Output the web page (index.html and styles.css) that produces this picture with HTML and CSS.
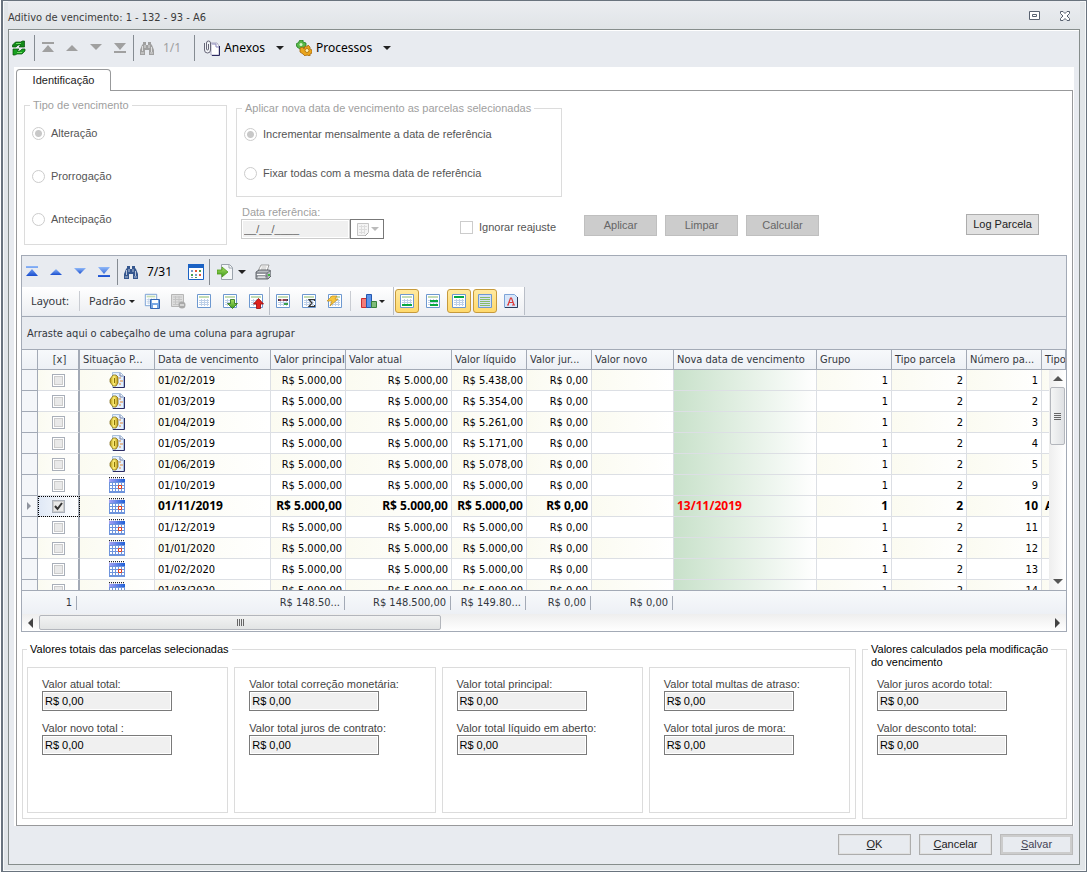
FILE: index.html
```html
<!DOCTYPE html>
<html lang="pt-BR">
<head>
    <meta charset="UTF-8">
    <meta name="viewport" content="width=device-width, initial-scale=1.0">
    <title>Aditivo de vencimento</title>
    <link rel="stylesheet" href="styles.css">
</head>
<body>

<svg class="sprite" xmlns="http://www.w3.org/2000/svg">
    <defs>
        <linearGradient id="blue" x1="0" y1="0" x2="0" y2="1"><stop offset="0" stop-color="#8fb8f8"/><stop offset="1" stop-color="#1a4fd0"/></linearGradient>
        <linearGradient id="leaf" x1="0" y1="0" x2="0" y2="1"><stop offset="0" stop-color="#a8e060"/><stop offset="1" stop-color="#3f9a20"/></linearGradient>
        <linearGradient id="gold" x1="0" y1="0" x2="1" y2="0"><stop offset="0" stop-color="#b89a18"/><stop offset=".5" stop-color="#fff27a"/><stop offset="1" stop-color="#b8941a"/></linearGradient>
        <linearGradient id="sky" x1="0" y1="0" x2="1" y2="0"><stop offset="0" stop-color="#a6a2f4"/><stop offset="1" stop-color="#1c5fd8"/></linearGradient>
    </defs>
    <symbol id="i-refresh" viewBox="0 0 16 16">
        <path d="M1.500 7V5l3-3h5l2-1h2v6H8l2-2H7L5 7z" fill="#128a18" stroke="#064d0a" stroke-width=".7"/>
        <path d="M14 9v2l-3 3H6l-2 1H2V9h6l-2 2h3l2-2z" fill="#17a020" stroke="#064d0a" stroke-width=".7"/>
        <path d="M5 3.500h5M6 12.500h5" stroke="#6ddc64"/>
    </symbol>
    <symbol id="i-first" viewBox="0 0 16 16"><path d="M2 2h12v2H2zM8 5l6 7H2z"/></symbol>
    <symbol id="i-up" viewBox="0 0 16 16"><path d="M8 5l6 6H2z"/></symbol>
    <symbol id="i-down" viewBox="0 0 16 16"><path d="M2 4h12L8 10z"/></symbol>
    <symbol id="i-last" viewBox="0 0 16 16"><path d="M2 3h12L8 10zM2 11h12v2H2z"/></symbol>
    <symbol id="i-find" viewBox="0 0 16 16">
        <path d="M4 2h3v3h2V2h3v2l1 1 2 5v5h-5v-5H6v5H1v-5l2-5 1-1z"/>
        <path d="M3.500 6v5M6 5v3M12.500 7v5M10 5v3M2 13h3M11 13h3" stroke="#fff" stroke-opacity=".65" fill="none"/>
    </symbol>
    <symbol id="i-attach" viewBox="0 0 16 16">
        <path d="M7 3h6l2 3v9H7z" fill="#fff" stroke="#9a98b8" stroke-width=".8"/>
        <path d="M8 4h4v3h3" fill="#eef" stroke="#8b88b8"/>
        <path d="M15.500 6v9.500H8" fill="none" stroke="#2c2a60"/>
        <path d="M.5 3v7a3 3 0 0 0 6 0V3a2 2 0 0 0-4 0v6a1 1 0 0 0 2 0V4" fill="#fff" fill-opacity=".4" stroke="#667"/>
    </symbol>
    <symbol id="i-gears" viewBox="0 0 16 16">
        <path d="M4 0h3v2l3 1v3L8 8 4 9 1 7 0 4l2-1z" fill="#58b848" stroke="#1f7d1f" stroke-width=".8"/>
        <circle cx="5" cy="4.500" r="1.500" fill="#d8f8c8"/>
        <path d="M4 8l3-1 1 2 1-3 2 1 1-2 2 2v2l2 1v3l-2 1v2l-3-1-2 1-2-2-3-2z" fill="#eaa51c" stroke="#a3660a" stroke-width=".8"/>
        <circle cx="11" cy="10.500" r="2" fill="#fff3b4" stroke="#b87a10"/>
    </symbol>
    <symbol id="i-month" viewBox="0 0 16 16">
        <path d="M.5.5h15v15H.5z" fill="#fff" stroke="#1b62c4"/><path d="M0 0h16v4H0z" fill="#1b62c4"/>
        <path d="M3 6h2v2H3zM7 10h2v2H7zM3 13h2v1H3z" fill="#7a9ccc"/><path d="M7 6h2v2H7zM11 10h2v2h-2z" fill="#e45a38"/><path d="M11 6h2v2h-2zM3 10h2v2H3zM7 13h2v1H7z" fill="#49a050"/>
    </symbol>
    <symbol id="i-export" viewBox="0 0 16 16">
        <path d="M4.500.500h8l3 3v12h-11z" fill="#f4f6f8" stroke="#9ba3ac"/><path d="M12 1v3h3" fill="#fff" stroke="#9ba3ac"/>
        <path d="M0 6h5V3l6 5-6 5v-3H0z" fill="url(#leaf)" stroke="#4f9c18" stroke-width=".8"/>
    </symbol>
    <symbol id="i-print" viewBox="0 0 16 16">
        <path d="M6 1h8l-2 6H3z" fill="#fff" stroke="#888" stroke-width=".8"/><path d="M6.500 3h5M6 5h5" stroke="#bbb"/>
        <path d="M1 8l3-2h10l2 1v5l-3 3H1z" fill="#b7bbc1" stroke="#474b52" stroke-width=".8"/>
        <path d="M1 9h11l3-2M1 12h11M12 9v6" fill="none" stroke="#5f636a" stroke-width=".8"/><path d="M3 13h7M2 10.500h8" stroke="#fff"/><path d="M13 11h2" stroke="#3ebd3c" stroke-width="2"/>
    </symbol>
    <!-- sheet shared by the layout icons -->
    <symbol id="i-sheet" viewBox="0 0 16 16">
        <path d="M1.500 1.500h13v13h-13z" fill="#fff" stroke="#6d98d0"/>
        <path d="M3 3h10v2H3z" fill="#c3dcb4"/><path d="M3 7.500h10M3 9.500h10M3 11.500h10M5.500 6v7M8.500 6v7M11.500 6v7" stroke="#bed0e8"/>
    </symbol>
    <symbol id="i-save" viewBox="0 0 16 16"><use href="#i-sheet" width="14" height="14"/><path d="M6.500 6.500h9v9h-9z" fill="#79a8e4" stroke="#3568b4"/><path d="M8 7h6v3H8zM9 12h4v3H9z" fill="#fff"/></symbol>
    <symbol id="i-remove" viewBox="0 0 16 16"><path d="M1.500 1.500h12v12h-12z" fill="#ddd" stroke="#b6b6b6"/><path d="M3 4h9M3 6.500h9M3 9h9M3 11.500h6M5.500 3v9M9 3v9" stroke="#c4c4c4"/><circle cx="12" cy="12" r="3.500" fill="#a9a9a9"/><path d="M10 12h4" stroke="#fff"/></symbol>
    <symbol id="i-in" viewBox="0 0 16 16"><use href="#i-sheet" width="16" height="16"/><path d="M8.500 6.500h4v4h3L10.500 15.500 5.500 10.500h3z" fill="url(#leaf)" stroke="#297018" stroke-width=".8"/></symbol>
    <symbol id="i-out" viewBox="0 0 16 16"><use href="#i-sheet" width="16" height="16"/><path d="M8.500 15.500h4V11h3l-5-5.500L5.500 11h3z" fill="#e0201c" stroke="#980808" stroke-width=".8"/></symbol>
    <symbol id="i-fields" viewBox="0 0 16 16"><use href="#i-sheet"/><path d="M3 6h3v2H3zM8 6h5v2H8z" fill="#333c54"/><path d="M4 7h8" stroke="#d44"/><path d="M9 10h4v2H9z" fill="#3ba04c"/></symbol>
    <symbol id="i-sum" viewBox="0 0 16 16"><use href="#i-sheet"/><path d="M13.500 8V6.500H8l3 3.500-3 3.500h5.500V12" fill="none" stroke="#333" stroke-width="1.200"/></symbol>
    <symbol id="i-flash" viewBox="0 0 16 16"><use href="#i-sheet"/><path d="M5 3h5L8 6h3l-8 7 2-5H0z" fill="#f7c53c" stroke="#c08c20" stroke-width=".7"/></symbol>
    <symbol id="i-chart" viewBox="0 0 16 16"><path d="M.5 5.500h5v9h-5z" fill="#f47c78" stroke="#cc2d2d"/><path d="M5.500 1.500h5v13h-5z" fill="#5c94ea" stroke="#2457ae"/><path d="M10.500 8.500h5v6h-5z" fill="#7fbc7a" stroke="#38803c"/></symbol>
    <symbol id="i-foot" viewBox="0 0 16 16"><use href="#i-sheet"/><path d="M3 11h10v2H3z" fill="#08a840"/></symbol>
    <symbol id="i-group" viewBox="0 0 16 16"><use href="#i-sheet"/><path d="M5 7h8v2H5zM5 11h8v2H5z" fill="#08a840"/></symbol>
    <symbol id="i-head" viewBox="0 0 16 16"><use href="#i-sheet"/><path d="M3 3h10v2H3z" fill="#08a840"/></symbol>
    <symbol id="i-lines" viewBox="0 0 16 16"><path d="M1.500 1.500h13v13h-13z" fill="#d2e0f6" stroke="#6d98d0"/><path d="M3 4.500h10M3 6.500h10M3 8.500h10M3 10.500h10M3 12.500h10" stroke="#86bb68"/></symbol>
    <symbol id="i-font" viewBox="0 0 16 16"><path d="M1.500 1.500h10l3 3v10h-13z" fill="#d6e6fa" stroke="#7ea4d8"/><path d="M14.500 4v10.500H2" fill="none" stroke="#2d3c5c"/><path d="M4 12h2M9 12h3M5 12l2.500-7h1L11 12M6 9.500h4" fill="none" stroke="#dc3a3a" stroke-width="1.200"/></symbol>
    <symbol id="i-paid" viewBox="0 0 16 16">
        <path d="M3.500.500h8l3 3v12h-11z" fill="#e4f0ff" stroke="#a9c0dc"/><path d="M11 1v3h3" fill="#fff" stroke="#7080a8"/><path d="M15.500 4v11.500H4" fill="none" stroke="#2c2c64"/>
        <path d="M10 6h2M11 9h3M10 12h2" stroke="#e08834"/>
        <path d="M4 3h3l2 2v6l-2 3H4L1 10V7z" fill="url(#gold)" stroke="#776208" stroke-width=".7"/><path d="M5.500 6v5" stroke="#8a7208"/>
    </symbol>
    <symbol id="i-cal" viewBox="0 0 16 16">
        <path d="M0 2h16v14H0z" fill="#6e94dc"/><path d="M0 2h16v3H0z" fill="url(#sky)"/>
        <path d="M0 .5h16" stroke="#222" stroke-dasharray="1 1"/><path d="M0 1.500h16" stroke="#bbc" stroke-dasharray="1 1"/>
        <path d="M1 6h2v2H1zM4 6h2v2H4zM7 6h2v2H7zM10 6h2v2h-2zM13 6h2v2h-2zM1 9h2v2H1zM4 9h2v2H4zM7 9h2v2H7zM13 9h2v2h-2zM1 12h2v2H1zM4 12h2v2H4zM7 12h2v2H7zM10 12h2v2h-2zM13 12h2v2h-2z" fill="#fff"/>
        <path d="M9.500 8.500h3v3h-3z" fill="#fff" stroke="#e2401c"/>
    </symbol>
    <symbol id="i-picker" viewBox="0 0 16 16"><path d="M2.500 2.500h11v9l-3 3h-8z" fill="#f4f4f4" stroke="#c5c5c5"/><path d="M4 5.500h8M4 8.500h8M4 11.500h6M6.500 4v9M9.500 4v9" stroke="#ddd"/><path d="M13 12l-3 3" stroke="#aaa"/></symbol>
    <symbol id="i-max" viewBox="0 0 12 10"><path d="M1.500.500h10v8h-10z" fill="#fff" stroke="#596270"/><path d="M4.500 3.500h4v2h-4z" fill="none" stroke="#596270"/></symbol>
    <symbol id="i-close" viewBox="0 0 12 10"><path d="M1.500.500h2.500l2 2 2-2h2.500v2L8 5l2.500 2.500v2H8l-2-2-2 2H1.500v-2L4 5 1.500 2.500z" fill="#fff" stroke="#596270"/></symbol>
</svg>

<div class="window">
    <header class="titlebar">
        <h1>Aditivo de vencimento: 1 - 132 - 93 - A6</h1>
        <button class="win-btn" aria-label="Maximizar"><svg><use href="#i-max"/></svg></button>
        <button class="win-btn" aria-label="Fechar"><svg><use href="#i-close"/></svg></button>
    </header>

    <div class="client">
        <div class="toolbar main-toolbar">
            <button class="tool" aria-label="Atualizar"><svg><use href="#i-refresh"/></svg></button>
            <i class="sep"></i>
            <button class="tool gray" aria-label="Primeiro" disabled><svg><use href="#i-first"/></svg></button>
            <button class="tool gray" aria-label="Anterior" disabled><svg><use href="#i-up"/></svg></button>
            <button class="tool gray" aria-label="Próximo" disabled><svg><use href="#i-down"/></svg></button>
            <button class="tool gray" aria-label="Último" disabled><svg><use href="#i-last"/></svg></button>
            <i class="sep"></i>
            <button class="tool gray" aria-label="Localizar" disabled><svg><use href="#i-find"/></svg></button>
            <span class="counter muted">1/1</span>
            <i class="sep"></i>
            <button class="tool-text"><svg><use href="#i-attach"/></svg>Anexos<b class="caret"></b></button>
            <button class="tool-text"><svg><use href="#i-gears"/></svg>Processos<b class="caret"></b></button>
        </div>

        <div class="tabs">
            <div class="tab-strip"><button class="tab">Identificação</button></div>

            <main class="panel">
                <div class="options">
                    <fieldset class="group tipo" disabled>
                        <legend>Tipo de vencimento</legend>
                        <label><input type="radio" name="tipo" checked>Alteração</label>
                        <label><input type="radio" name="tipo">Prorrogação</label>
                        <label><input type="radio" name="tipo">Antecipação</label>
                    </fieldset>
                    <div class="apply">
                        <fieldset class="group modo" disabled>
                            <legend>Aplicar nova data de vencimento as parcelas selecionadas</legend>
                            <label><input type="radio" name="modo" checked>Incrementar mensalmente a data de referência</label>
                            <label><input type="radio" name="modo">Fixar todas com a mesma data de referência</label>
                        </fieldset>
                        <div class="apply-row">
                            <div class="date-field">
                                <label for="ref">Data referência:</label>
                                <div class="date-box">
                                    <input id="ref" type="text" value="__/__/____" disabled>
                                    <button aria-label="Abrir calendário" disabled><svg><use href="#i-picker"/></svg><b class="caret"></b></button>
                                </div>
                            </div>
                            <label class="ignore"><input type="checkbox" disabled>Ignorar reajuste</label>
                            <button class="btn" disabled>Aplicar</button>
                            <button class="btn" disabled>Limpar</button>
                            <button class="btn" disabled>Calcular</button>
                            <button class="btn log">Log Parcela</button>
                        </div>
                    </div>
                </div>

                <section class="grid">
                    <div class="toolbar grid-toolbar">
                        <button class="tool blue" aria-label="Primeiro"><svg><use href="#i-first"/></svg></button>
                        <button class="tool blue" aria-label="Anterior"><svg><use href="#i-up"/></svg></button>
                        <button class="tool blue" aria-label="Próximo"><svg><use href="#i-down"/></svg></button>
                        <button class="tool blue" aria-label="Último"><svg><use href="#i-last"/></svg></button>
                        <i class="sep"></i>
                        <button class="tool navy" aria-label="Localizar"><svg><use href="#i-find"/></svg></button>
                        <span class="counter">7/31</span>
                        <button class="tool" aria-label="Calendário"><svg><use href="#i-month"/></svg></button>
                        <i class="sep"></i>
                        <button class="tool wide" aria-label="Exportar"><svg><use href="#i-export"/></svg><b class="caret"></b></button>
                        <button class="tool" aria-label="Imprimir"><svg><use href="#i-print"/></svg></button>
                    </div>
                    <div class="layout-bar">
                        <div class="segment">
                            <span class="layout-label">Layout:</span>
                            <i class="soft-sep"></i>
                            <button class="layout-name">Padrão<b class="caret small"></b></button>
                            <button class="lay" aria-label="Salvar layout"><svg><use href="#i-save"/></svg></button>
                            <button class="lay" aria-label="Excluir layout"><svg><use href="#i-remove"/></svg></button>
                            <button class="lay" aria-label="Layout"><svg><use href="#i-sheet"/></svg></button>
                            <button class="lay" aria-label="Importar"><svg><use href="#i-in"/></svg></button>
                            <button class="lay" aria-label="Restaurar"><svg><use href="#i-out"/></svg></button>
                        </div>
                        <div class="segment">
                            <button class="lay" aria-label="Campos"><svg><use href="#i-fields"/></svg></button>
                            <button class="lay" aria-label="Totais"><svg><use href="#i-sum"/></svg></button>
                            <button class="lay" aria-label="Formatação"><svg><use href="#i-flash"/></svg></button>
                            <i class="soft-sep"></i>
                            <button class="lay chart" aria-label="Gráfico"><svg><use href="#i-chart"/></svg><b class="caret small"></b></button>
                        </div>
                        <div class="segment">
                            <button class="lay on" aria-label="Rodapé"><svg><use href="#i-foot"/></svg></button>
                            <button class="lay" aria-label="Rodapé de grupo"><svg><use href="#i-group"/></svg></button>
                            <button class="lay on" aria-label="Painel de grupo"><svg><use href="#i-head"/></svg></button>
                            <button class="lay on" aria-label="Linhas alternadas"><svg><use href="#i-lines"/></svg></button>
                            <button class="lay" aria-label="Fonte"><svg><use href="#i-font"/></svg></button>
                        </div>
                    </div>
                    <div class="group-panel">Arraste aqui o cabeçalho de uma coluna para agrupar</div>
                    <div class="viewport">
                        <table class="data">
                            <colgroup>
                                <col class="c-mark"><col class="c-check"><col class="c-75"><col class="c-date"><col class="c-75"><col class="c-atual"><col class="c-75"><col class="c-juros"><col class="c-novo"><col class="c-nova"><col class="c-75"><col class="c-75"><col class="c-75"><col>
                            </colgroup>
                            <thead>
                                <tr><th></th><th class="center">[x]</th><th>Situação P...</th><th>Data de vencimento</th><th>Valor principal</th><th>Valor atual</th><th>Valor líquido</th><th>Valor jur...</th><th>Valor novo</th><th>Nova data de vencimento</th><th>Grupo</th><th>Tipo parcela</th><th>Número pa...</th><th>Tipo</th></tr>
                            </thead>
                            <tbody id="rows"></tbody>
                        </table>
                        <div class="vscroll">
                            <button aria-label="Subir"><b class="arrow up"></b></button>
                            <div class="thumb"><i></i></div>
                            <button class="end" aria-label="Descer"><b class="arrow down"></b></button>
                        </div>
                    </div>
                    <table class="summary">
                        <colgroup>
                            <col class="c-count"><col class="c-gap"><col class="c-75"><col class="c-atual"><col class="c-75"><col class="c-juros"><col class="c-novo"><col>
                        </colgroup>
                        <tr><td><span>1</span></td><td></td><td><span>R$ 148.50...</span></td><td><span>R$ 148.500,00</span></td><td><span>R$ 149.80...</span></td><td><span>R$ 0,00</span></td><td><span>R$ 0,00</span></td><td></td></tr>
                    </table>
                    <div class="hscroll">
                        <button aria-label="Esquerda"><b class="arrow left"></b></button>
                        <div class="thumb"><i></i></div>
                        <button class="end" aria-label="Direita"><b class="arrow right"></b></button>
                    </div>
                </section>

                <div class="totals">
                    <fieldset class="group selected">
                        <legend>Valores totais das parcelas selecionadas</legend>
                        <div class="box">
                            <label>Valor atual total:<input type="text" value="R$ 0,00" readonly></label>
                            <label>Valor novo total :<input type="text" value="R$ 0,00" readonly></label>
                        </div>
                        <div class="box">
                            <label>Valor total correção monetária:<input type="text" value="R$ 0,00" readonly></label>
                            <label>Valor total juros de contrato:<input type="text" value="R$ 0,00" readonly></label>
                        </div>
                        <div class="box">
                            <label>Valor total principal:<input type="text" value="R$ 0,00" readonly></label>
                            <label>Valor total líquido em aberto:<input type="text" value="R$ 0,00" readonly></label>
                        </div>
                        <div class="box">
                            <label>Valor total multas de atraso:<input type="text" value="R$ 0,00" readonly></label>
                            <label>Valor total juros de mora:<input type="text" value="R$ 0,00" readonly></label>
                        </div>
                    </fieldset>
                    <fieldset class="group computed">
                        <legend>Valores calculados pela modificação<br>do vencimento</legend>
                        <label>Valor juros acordo total:<input type="text" value="R$ 0,00" readonly></label>
                        <label>Valor desconto total:<input type="text" value="R$ 0,00" readonly></label>
                    </fieldset>
                </div>
            </main>
        </div>

        <footer class="actions">
            <button class="btn dialog"><u>O</u>K</button>
            <button class="btn dialog"><u>C</u>ancelar</button>
            <button class="btn dialog default"><u>S</u>alvar</button>
        </footer>
    </div>
</div>

<script>
    const parcelas = [
        ['paid', '01/02/2019', '5.438,00', 1],
        ['paid', '01/03/2019', '5.354,00', 2],
        ['paid', '01/04/2019', '5.261,00', 3],
        ['paid', '01/05/2019', '5.171,00', 4],
        ['paid', '01/06/2019', '5.078,00', 5],
        ['cal', '01/10/2019', '5.000,00', 9],
        ['cal', '01/11/2019', '5.000,00', 10, '13/11/2019'],
        ['cal', '01/12/2019', '5.000,00', 11],
        ['cal', '01/01/2020', '5.000,00', 12],
        ['cal', '01/02/2020', '5.000,00', 13],
        ['cal', '01/03/2020', '5.000,00', 14]
    ];

    document.getElementById('rows').innerHTML = parcelas.map(([icon, data, liquido, numero, nova]) => `
        <tr class="${nova ? 'current' : ''}">
            <td class="mark">${nova ? '<b class="arrow right"></b>' : ''}</td>
            <td class="check"><input type="checkbox" aria-label="Parcela ${numero}" ${nova ? 'checked' : ''}></td>
            <td class="status"><svg><use href="#i-${icon}"/></svg></td>
            <td>${data}</td>
            <td class="num">R$ 5.000,00</td>
            <td class="num">R$ 5.000,00</td>
            <td class="num">R$ ${liquido}</td>
            <td class="num">R$ 0,00</td>
            <td></td>
            <td class="nova">${nova || ''}</td>
            <td class="num">1</td>
            <td class="num">2</td>
            <td class="num">${numero}</td>
            <td>${nova ? 'A' : ''}</td>
        </tr>`).join('');
</script>

</body>
</html>
```
FILE: styles.css
```css
* {
    box-sizing: border-box;
}
body {
    margin: 0;
    padding-left: 1px;
    background: #fff;
    color: #222;
    font: 11px/13px "Liberation Sans", Arial, sans-serif;
}
button, input {
    font: inherit;
    color: inherit;
    margin: 0;
    padding: 0;
}
button {
    background: none;
    border: none;
}
svg {
    width: 16px;
    height: 16px;
    flex: none;
}
.sprite {
    position: absolute;
    width: 0;
    height: 0;
}

/* window frame */
.window {
    display: flex;
    flex-direction: column;
    height: 100vh;
    min-height: 720px;
    padding: 0 6px 6px 5px;
    border: 2px solid #69737e;
    border-width: 1px 1px 1px 2px;
    background: #e1e5e8;
    box-shadow: inset 0 0 0 1px #f6f8f9;
}
.titlebar {
    display: flex;
    align-items: center;
    height: 28px;
    padding-top: 5px;
    color: #3b3b3b;
    background: linear-gradient(#ebedf1, #e0e4e7);
}
.titlebar h1 {
    flex: 1;
    margin: 0;
    font: 11px/14px "DejaVu Sans Condensed", "Noto Sans", sans-serif;
}
.win-btn {
    width: 31px;
    height: 14px;
}
.win-btn svg {
    width: 12px;
    height: 10px;
}
.client {
    flex: 1;
    display: flex;
    flex-direction: column;
    min-height: 0;
    padding: 0 5px 9px;
    border: 1px solid #868d8c;
    background: #e8ebf0;
    box-shadow: inset 0 1px #fff;
}

/* toolbars */
.toolbar {
    display: flex;
    align-items: center;
    font: 12px/16px "Noto Sans", "DejaVu Sans Condensed", sans-serif;
    color: #000;
}
.main-toolbar {
    height: 37px;
    padding-bottom: 2px;
}
.main-toolbar .tool:first-child {
    width: 22px;
    margin-left: -3px;
    justify-content: flex-start;
}
.tool {
    display: flex;
    align-items: center;
    justify-content: center;
    width: 24px;
    height: 24px;
    flex: none;
}
.tool.wide {
    width: 40px;
    gap: 5px;
}
.gray svg {
    fill: #a0a0a0;
}
.blue svg {
    fill: url(#blue);
}
.navy svg {
    fill: #35578f;
}
.sep {
    width: 1px;
    height: 26px;
    margin: 0 1px;
    background: #858b92;
}
.counter {
    padding: 0 12px 0 4px;
}
.muted {
    color: #a0a0a0;
}
.tool-text {
    display: flex;
    align-items: center;
    gap: 4px;
    padding: 0 4px 0 8px;
}
.tool-text .caret {
    margin-left: 7px;
}
.caret {
    border: 4px solid transparent;
    border-top-color: #222;
    border-bottom: 0;
}
.caret.small {
    border-width: 3px;
    border-bottom: 0;
}

/* tab */
.tabs {
    flex: 1;
    display: flex;
    flex-direction: column;
    min-height: 0;
    padding: 2px 1px 0 2px;
    background: #fff;
}
.tab-strip {
    display: flex;
}
.tab {
    width: 95px;
    height: 22px;
    margin-bottom: -1px;
    border: 1px solid #98999b;
    border-bottom: 0;
    border-radius: 4px 4px 0 0;
    background: #fff;
    z-index: 1;
}
.panel {
    flex: 1;
    display: flex;
    flex-direction: column;
    min-height: 0;
    padding: 8px 5px 6px 4px;
    border: 1px solid #98999b;
}

/* form groups */
.group {
    min-width: 0;
    margin: 0;
    padding: 0;
    border: 1px solid #dcdcdc;
}
.group legend {
    height: 13px;
    margin-left: 5px;
    padding: 0 3px;
    white-space: nowrap;
}
.options {
    display: flex;
    gap: 9px;
    height: 156px;
    padding-left: 3px;
    color: #555;
}
.options legend {
    color: #a0a0a0;
}
.tipo {
    width: 203px;
    height: 146px;
}
.options .group label {
    display: flex;
    align-items: center;
    gap: 6px;
    margin-left: 7px;
}
.tipo label {
    margin-top: 15px;
    margin-bottom: 30px;
}
.modo label {
    margin-top: 13px;
    margin-bottom: 26px;
}
input[type="radio"] {
    appearance: none;
    width: 13px;
    height: 13px;
    border: 1px solid #ccc;
    border-radius: 50%;
    background: #fff;
}
input[type="radio"]:checked {
    background: radial-gradient(circle, #c8c8c8 3px, #fff 4px);
}
.apply {
    flex: 1;
    padding-top: 3px;
}
.modo {
    width: 326px;
    height: 95px;
}
.apply-row {
    display: flex;
    align-items: flex-end;
    gap: 8px;
    height: 42px;
    padding: 0 28px 0 5px;
}
.date-field {
    margin-right: 68px;
    color: #a0a0a0;
}
.date-field label {
    padding-left: 1px;
}
.date-box {
    display: flex;
}
.date-box input {
    width: 109px;
    height: 20px;
    padding-left: 2px;
    border: 1px solid #ccc;
    background: #f0f0f0;
    box-shadow: inset 0 0 0 1px #fff;
    color: #666;
}
.date-box button {
    display: flex;
    align-items: center;
    justify-content: center;
    width: 34px;
    height: 20px;
    border: 1px solid #777;
}
.date-box .caret {
    border-top-color: #bbb;
}
.ignore {
    display: flex;
    align-items: center;
    gap: 6px;
    width: 116px;
    height: 24px;
}
input[type="checkbox"] {
    appearance: none;
    width: 13px;
    height: 13px;
    border: 1px solid #ccc;
    background: #fff;
}
.btn {
    width: 73px;
    height: 21px;
    border: 1px solid #adadad;
    background: #e1e1e1;
    color: #222;
}
.apply-row .btn {
    margin-bottom: 3px;
}
.btn:disabled {
    border-color: #bfbfbf;
    background: #ccc;
    color: #666;
}
.apply-row .log {
    margin-left: auto;
    margin-bottom: 4px;
}

/* grid */
.grid {
    flex: 1;
    display: flex;
    flex-direction: column;
    min-height: 0;
    border: 1px solid #a3aab6;
    background: #e8ebf0;
    font: 11px/14px "DejaVu Sans Condensed", "Noto Sans", sans-serif;
    color: #33373d;
}
.grid-toolbar {
    height: 31px;
    flex: none;
}
.grid-toolbar .tool:first-child {
    margin-left: -2px;
}
.layout-bar {
    display: flex;
    height: 30px;
    flex: none;
    border-bottom: 1px solid #a3aab6;
    font-family: "Noto Sans", "DejaVu Sans Condensed", sans-serif;
}
.segment {
    display: flex;
    align-items: center;
    height: 28px;
    border-right: 1px solid #b9bec7;
    background: linear-gradient(#fff, #eceef2);
}
.layout-label {
    padding: 0 8px 0 9px;
}
.soft-sep {
    width: 1px;
    height: 20px;
    margin: 0 2px;
    background: #c9ccd2;
}
.layout-name {
    display: flex;
    align-items: center;
    gap: 3px;
    padding: 0 4px 0 7px;
}
.lay {
    display: flex;
    align-items: center;
    justify-content: center;
    width: 24px;
    height: 24px;
    margin: 0 1px;
    border-radius: 3px;
}
.chart {
    width: 38px;
    gap: 2px;
}
.on {
    border: 1px solid #c69a3c;
    background: linear-gradient(#ffe9a0, #ffd96c);
}
.group-panel {
    flex: none;
    height: 32px;
    padding: 10px 5px;
}
.viewport {
    flex: 1;
    position: relative;
    min-height: 0;
    overflow: hidden;
    background: #fff;
    border-top: 1px solid #a3aab6;
}
.data, .summary {
    width: 100%;
    table-layout: fixed;
    border-collapse: separate;
    border-spacing: 0;
}
.c-mark { width: 16px; }
.c-check { width: 42px; }
.c-75 { width: 75px; }
.c-date { width: 116px; }
.c-atual { width: 106px; }
.c-juros { width: 65px; }
.c-novo { width: 82px; }
.c-nova { width: 143px; }
.c-count { width: 55px; }
.c-gap { width: 193px; }
.data th {
    height: 20px;
    padding: 0 0 0 3px;
    border-right: 1px solid #a3aab6;
    border-bottom: 1px solid #a3aab6;
    background: linear-gradient(#f7f9fb, #edf0f5);
    font-weight: normal;
    text-align: left;
    white-space: nowrap;
    overflow: hidden;
}
.data th.center {
    text-align: center;
}
.data td {
    height: 21px;
    padding: 1px 3px 0;
    border-right: 1px solid #dcdfe4;
    border-bottom: 1px solid #dcdfe4;
    color: #000;
    white-space: nowrap;
    overflow: hidden;
}
.data tr:nth-child(odd) td {
    background: linear-gradient(90deg, #fbfbf1, #fff);
}
.data .num {
    text-align: right;
}
.data td.mark, .data tr:nth-child(odd) td.mark {
    padding-left: 5px;
    border-color: #a3aab6;
    background: #f4f6f9;
}
.mark .arrow {
    display: block;
}
.data th:nth-child(2), .data .check {
    border-right: 2px solid #a3aab6;
}
.data .check, .data .status {
    padding-top: 0;
}
.check input {
    display: block;
    margin: 0 auto;
    border-color: #a9afb9;
    background: #e9e9e9;
    box-shadow: inset 0 0 0 1px #fff, inset 0 0 0 2px #ccc;
}
.check input:checked {
    background: #e9e9e9 url("data:image/svg+xml,%3Csvg xmlns='http://www.w3.org/2000/svg' viewBox='0 0 11 11'%3E%3Cpath d='M2 5l2.500 3L9 2' fill='none' stroke='%23333' stroke-width='2'/%3E%3C/svg%3E");
    box-shadow: inset 0 0 0 1px #ccc;
}
.status svg {
    display: block;
    margin: 0 auto;
}
.data tr .nova, .data tr:nth-child(odd) .nova {
    background: linear-gradient(90deg, #c8e1ca, #fff);
}
.data .current td {
    padding-top: 0;
    font: bold 12px/14px "Noto Sans", "DejaVu Sans Condensed", sans-serif;
}
.data .current .nova {
    color: #f00;
}
.data tr.current .check {
    outline: 1px dotted #000;
    outline-offset: -1px;
    background: linear-gradient(90deg, #dfe8f6, #fff);
}

/* scroll bars */
.vscroll {
    position: absolute;
    top: 20px;
    right: 0;
    bottom: 0;
    display: flex;
    flex-direction: column;
    width: 17px;
    background: linear-gradient(90deg, #eee, #fff);
}
.vscroll button {
    height: 17px;
}
.thumb {
    display: flex;
    align-items: center;
    justify-content: center;
    border: 1px solid #b3b6bc;
    border-radius: 2px;
    background: linear-gradient(#f2f3f3, #e2e4e4);
}
.vscroll .thumb {
    height: 58px;
    margin: 0 1px;
    background: linear-gradient(90deg, #f4f5f5, #dfe1e4);
}
.vscroll .thumb i {
    width: 7px;
    height: 7px;
    background: repeating-linear-gradient(#666 0 1px, transparent 1px 2px);
}
.vscroll .end {
    margin-top: auto;
}
.hscroll {
    display: flex;
    flex: none;
    align-items: center;
    height: 17px;
    background: linear-gradient(#eee, #fff);
}
.hscroll button {
    width: 17px;
    height: 17px;
}
.hscroll .thumb {
    width: 402px;
    height: 15px;
}
.hscroll .thumb i {
    width: 7px;
    height: 7px;
    background: repeating-linear-gradient(90deg, #666 0 1px, transparent 1px 2px);
}
.hscroll .end {
    margin-left: auto;
}
.arrow {
    display: inline-block;
    vertical-align: middle;
    width: 0;
    height: 0;
    border: 5px solid transparent;
}
.arrow.up { border-bottom-color: #555; border-top: 0; }
.arrow.down { border-top-color: #555; border-bottom: 0; }
.arrow.left { border-right-color: #444; border-left: 0; }
.arrow.right { border-left-color: #444; border-right: 0; }
.mark .arrow {
    border-width: 4px;
    border-right: 0;
    border-left-color: #8f949e;
}
.summary {
    flex: none;
    height: 24px;
    border-top: 1px solid #a3aab6;
    background: linear-gradient(#f7f9fb, #edf0f5);
}
.summary td {
    padding: 0;
}
.summary span {
    display: block;
    padding: 0 4px 0 0;
    border-right: 1px solid #a3aab6;
    text-align: right;
    white-space: nowrap;
}

/* totals */
.totals {
    display: flex;
    gap: 6px;
    height: 176px;
    margin: 11px 0 0 1px;
    flex: none;
    color: #444;
}
.totals legend {
    color: #000;
}
.selected {
    flex: 1;
    display: flex;
    gap: 6px;
    padding: 11px 5px 5px 4px;
}
.group.selected legend {
    margin-left: 0;
}
.box {
    flex: 1;
    padding: 10px 14px;
    border: 1px solid #dcdcdc;
}
.computed {
    width: 205px;
    padding: 22px 14px 0;
}
.group.computed legend {
    margin-left: -9px;
}
.totals label {
    display: block;
    margin-bottom: 11px;
    white-space: nowrap;
}
.totals input {
    display: block;
    width: 130px;
    height: 20px;
    padding: 0 2px;
    border: 1px solid #7a7a7a;
    background: #f0f0f0;
    box-shadow: inset 0 0 0 1px #fff;
    color: #000;
}

.actions {
    display: flex;
    justify-content: flex-end;
    gap: 8px;
    padding: 8px 1px 0 0;
}
.dialog {
    background: #e8ebf0;
    box-shadow: inset 0 0 0 1px #e1e1e1;
}
.default {
    border-color: #bbb;
    box-shadow: inset 0 0 0 2px #ccc;
    color: #445;
}
```
